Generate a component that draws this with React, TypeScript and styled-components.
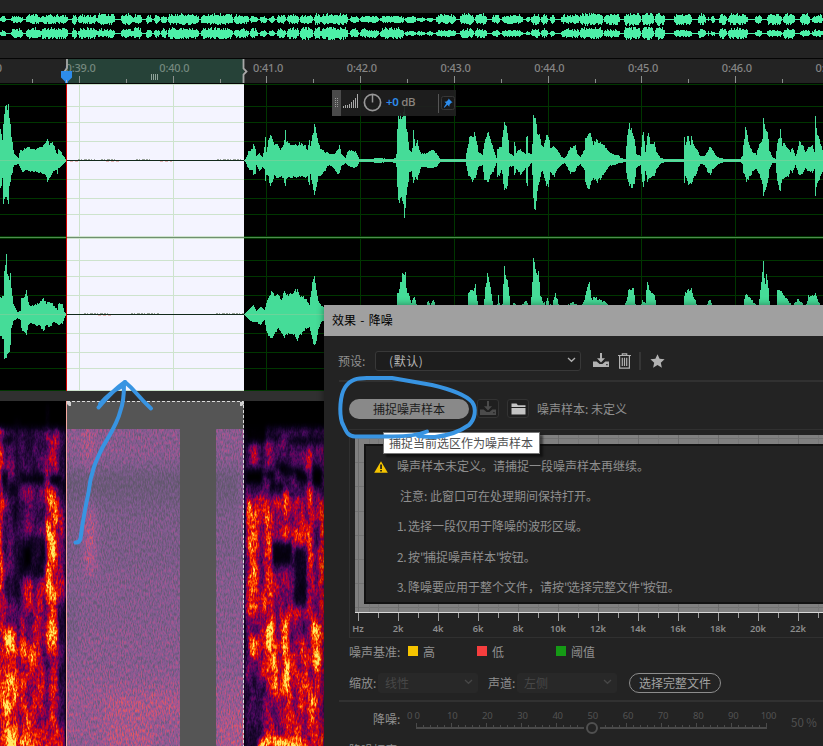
import React from "react";
import styled, { createGlobalStyle } from "styled-components";

const GlobalStyle = createGlobalStyle`
  * { box-sizing: border-box; }
  html, body { margin: 0; padding: 0; background: #232323; }
  body {
    font-family: "Noto Sans CJK SC", "Noto Sans", sans-serif;
    font-size: 12px;
    color: #8f8f8f;
    overflow: hidden;
  }
`;

/* ---------- waveform data: [x, amplitude up, amplitude down] ---------- */

type Env = number[];

const CH1: Env = [
  0,33,29, 2,19,17, 3,34,40, 4,48,40, 6,54,38, 7,49,38, 8,54,40, 9,39,25, 10,35,23, 11,24,14, 12,19,12, 13,10,6, 14,6,4, 18,2,3,
  20,11,8, 22,9,11, 26,13,9, 30,12,10, 35,11,11, 40,14,12, 44,15,14, 46,18,16, 47,22,21, 49,16,18, 51,18,14, 53,16,10, 56,8,9,
  57,6,13, 58,11,7, 60,10,6, 62,6,4, 65,1,1, 66,0,0, 244,0,0, 245,1,1, 248,8,8, 252,12,10, 253,16,14, 255,12,14, 256,4,4, 259,7,10,
  262,3,7, 264,13,8, 265,24,20, 266,8,14, 268,20,17, 270,28,28, 272,20,20, 274,15,15, 277,17,17, 280,11,15, 283,15,18, 285,30,26,
  286,18,18, 290,16,16, 295,15,16, 299,17,16, 305,14,16, 307,10,15, 309,20,25, 310,15,14, 313,28,27, 314,37,32, 316,28,25,
  318,17,16, 320,12,15, 323,10,12, 325,7,10, 327,8,5, 329,6,4, 334,6,8, 338,12,14, 339,14,12, 341,6,5, 345,2,2, 347,8,4,
  350,10,6, 353,10,7, 356,7,6, 359,1,1, 370,1,1, 377,2,2, 390,1,1, 395,2,2, 396,6,6, 397,33,24, 398,45,42, 402,45,38, 404,56,54,
  405,45,44, 406,34,32, 408,19,20, 409,10,12, 411,8,10, 412,12,15, 413,28,24, 415,15,17, 417,20,20, 418,14,14, 421,6,6, 425,7,6,
  429,9,7, 432,10,8, 436,7,6, 440,1,1, 448,1,1, 465,1,1, 466,7,5, 468,17,15, 470,26,17, 472,22,20, 474,28,18, 476,20,15,
  478,8,6, 482,5,4, 484,17,18, 486,23,20, 488,28,22, 490,21,15, 493,11,10, 496,2,2, 497,12,15, 499,12,15, 501,12,9, 502,22,13,
  504,37,32, 507,30,24, 509,8,6, 513,4,5, 514,20,15, 516,8,8, 520,11,14, 525,6,7, 526,25,23, 527,23,26, 528,8,6, 531,6,2,
  532,16,14, 533,49,40, 535,44,49, 537,28,30, 539,25,20, 541,14,10, 543,12,12, 546,26,24, 548,25,25, 550,12,12, 554,14,16,
  557,10,8, 561,3,4, 564,2,2, 566,4,5, 570,12,12, 575,14,10, 577,6,6, 580,3,3, 584,10,10, 585,22,22, 588,28,30, 590,26,24,
  593,17,17, 596,20,22, 600,17,18, 604,14,12, 609,8,5, 614,5,4, 618,5,2, 620,2,2, 625,1,1, 626,15,12, 628,33,21, 629,35,24,
  632,29,26, 634,20,24, 636,6,7, 640,4,4, 642,24,20, 643,30,28, 645,8,10, 647,24,20, 648,27,20, 650,17,17, 654,18,15,
  656,8,8, 660,2,3, 664,1,1, 683,1,1, 684,24,22, 685,15,15, 687,24,21, 688,23,25, 690,15,22, 691,24,22, 693,16,18, 696,12,13,
  698,8,6, 700,4,3, 704,4,4, 707,8,10, 710,14,14, 712,10,9, 716,4,5, 720,2,2, 725,1,1, 740,1,1, 742,4,3, 743,15,12, 745,31,15,
  746,31,20, 748,17,18, 752,8,11, 756,6,8, 758,13,12, 762,22,22, 763,40,36, 766,30,27, 768,23,18, 769,10,8, 772,3,2, 775,1,2,
  777,18,20, 779,24,28, 780,30,30, 782,15,18, 784,17,17, 788,12,15, 790,8,10, 792,12,12, 795,4,4, 797,10,10, 799,18,15,
  803,15,12, 805,8,7, 808,12,10, 812,16,12, 814,8,8, 815,44,37, 816,30,26, 819,20,18, 823,8,8,
];

const CH2: Env = [
  0,16,20, 3,18,24, 4,47,42, 6,58,40, 7,40,42, 9,35,35, 10,41,30, 11,25,14, 13,10,6, 17,2,3, 20,3,5, 21,17,14, 24,17,18,
  26,23,20, 28,12,10, 30,8,8, 35,9,10, 40,12,12, 43,16,16, 46,11,10, 49,13,13, 53,9,7, 57,4,9, 58,11,10, 62,11,9, 64,2,3,
  66,0,0, 244,0,0, 245,1,1, 250,6,6, 253,9,7, 256,3,7, 260,8,10, 264,4,5, 266,12,15, 269,17,23, 271,24,23, 275,18,18,
  278,20,14, 281,15,17, 284,22,22, 288,18,18, 292,22,18, 297,24,25, 300,18,20, 305,16,14, 309,10,13, 312,30,24, 314,39,33,
  316,23,25, 318,12,14, 321,9,7, 324,5,5, 396,5,5, 397,20,5, 399,25,5, 400,30,5, 402,40,5, 404,41,5, 405,40,5, 406,25,5,
  408,20,5, 411,12,5, 414,17,5, 416,10,5, 420,4,5, 428,12,5, 430,9,5, 433,14,5, 436,8,5, 466,5,5, 467,5,5, 468,20,5, 470,23,5,
  473,24,5, 475,30,5, 477,12,5, 478,5,5, 483,5,5, 485,27,5, 487,40,5, 489,35,5, 491,20,5, 493,5,5, 497,10,5, 498,18,5,
  500,5,5, 502,10,5, 504,47,5, 506,38,5, 508,30,5, 510,6,5, 514,12,5, 518,5,5, 526,14,5, 530,4,5, 532,30,5, 533,58,5,
  535,45,5, 537,38,5, 538,44,5, 540,20,5, 542,13,5, 545,10,5, 547,16,5, 549,10,5, 552,9,5, 554,18,5, 555,20,5, 557,14,5,
  560,5,5, 572,12,5, 576,10,5, 580,4,5, 584,15,5, 587,27,5, 589,32,5, 591,15,5, 594,17,5, 600,14,5, 605,13,5, 609,7,5,
  620,3,5, 626,12,5, 628,25,5, 631,26,5, 633,27,5, 635,10,5, 640,5,5, 642,14,5, 645,12,5, 647,34,5, 650,22,5, 654,20,5,
  656,8,5, 665,3,5, 683,3,5, 684,20,5, 688,25,5, 691,25,5, 693,18,5, 697,8,5, 705,8,5, 710,16,5, 712,6,5, 740,5,5, 743,8,5,
  745,20,5, 749,18,5, 753,12,5, 758,6,5, 760,25,5, 762,40,5, 763,50,5, 765,30,5, 766,39,5, 768,25,5, 770,4,5, 776,8,5,
  777,25,5, 781,22,5, 786,16,5, 792,8,5, 797,15,5, 801,12,5, 805,6,5, 808,18,5, 812,18,5, 815,20,5, 818,12,5, 823,5,5,
];

/* Overview loudness: [start x, end x, upper amplitude, lower amplitude] */
const BURSTS: number[][] = [
  [0,6,3,3],[11,23,3,4],[26,41,4,5],[41,68,4,5],[72,77,5,5],[78,97,4,5],[97,115,5,4],[121,133,5,4],[133,142,4,5],
  [146,152,4,5],[154,160,4,4],[161,167,4,5],[168,199,5,5],[201,233,5,5],[234,249,4,4],[250,258,3,4],[260,267,3,3],
  [269,275,3,3],[277,286,4,4],[287,299,4,5],[300,313,4,6],[314,321,5,6],[321,348,5,6],[350,359,3,4],[360,379,3,4],
  [380,404,3,5],[405,416,3,2],[417,425,2,2],[427,433,2,2],[436,456,4,3],[460,474,5,4],[475,487,5,4],[492,500,4,3],
  [502,523,4,3],[526,530,3,2],[531,540,5,4],[541,548,5,4],[550,555,4,3],[561,580,4,4],[580,603,6,5],[604,620,5,4],
  [624,641,6,6],[642,654,6,6],[655,665,6,6],[674,692,5,3],[698,706,5,4],[708,709,3,3],[711,715,4,3],[719,727,5,5],
  [728,748,5,5],[755,762,4,3],[767,782,5,3],[783,795,5,5],[800,810,5,3],[812,823,4,3],
];

const hash = (n: number) => {
  const s = Math.sin(n * 127.1 + 11.7) * 43758.5453;
  return s - Math.floor(s);
};

const sample = (env: Env, x: number): [number, number] => {
  let i = 0;
  while (i + 5 < env.length && env[i + 3] <= x) i += 3;
  if (i + 5 >= env.length) return [env[i + 1], env[i + 2]];
  const t = (x - env[i]) / (env[i + 3] - env[i]);
  return [
    env[i + 1] + (env[i + 4] - env[i + 1]) * t,
    env[i + 2] + (env[i + 5] - env[i + 2]) * t,
  ];
};

const channelPath = (env: Env, cy: number, seed: number) => {
  let d = "";
  for (let x = 0; x < 823; x++) {
    const [u, l] = sample(env, x);
    if (u <= 0 && l <= 0) continue;
    const up = Math.max(0, Math.round(u * (0.9 + 0.17 * hash(x + seed))));
    const dn = Math.max(0, Math.round(l * (0.9 + 0.17 * hash(x * 3 + seed))));
    d += `M${x} ${cy - up}h1v${up + dn + 1}h-1z`;
  }
  return d;
};

const overviewPath = (cy: number, which: 2 | 3) => {
  let d = `M0 ${cy}h823v1h-823z`;
  BURSTS.forEach((b) => {
    for (let x = b[0]; x < b[1]; x += 1) {
      const r = hash(x * 1.7 + which * 31);
      const edge = Math.min(1, (x - b[0] + 1.5) / 3, (b[1] - x + 0.5) / 3);
      const a = b[which] * (0.5 + 0.68 * r) * edge;
      const up = Math.min(6, Math.round(a));
      const dn = Math.min(6, Math.round(b[which] * (0.5 + 0.6 * hash(x * 2.3 + which)) * edge));
      d += `M${x} ${cy - up}h1v${up + dn + 1}h-1z`;
    }
  });
  return d;
};

const SECONDS = [79, 173, 266, 360, 454, 548, 641, 735];
const HALVES = [32, 126, 220, 313, 407, 501, 595, 688, 782];
const LEVELS = [0, 22, 38, 57, 76, 95, 114, 130, 152, 154, 176, 192, 211, 230, 249, 268, 284, 306];

/* ---------- main workspace ---------- */

const Workspace = styled.main`
  display: flex;
  flex-direction: column;
  width: 823px;
  height: 746px;
  overflow: hidden;
  position: relative;
  background: #232323;
`;

const Overview = styled.section`
  margin-top: 13px;
  height: 27px;
  background: #000;
  flex: none;
  svg { display: block; }
`;

const Ruler = styled.section`
  margin-top: 18px;
  height: 26px;
  flex: none;
  display: grid;
  overflow: hidden;
  border-top: 1px solid #050505;
  border-bottom: 1px solid #050505;
  > * { grid-area: 1 / 1; }
`;

const RulerLabels = styled.div`
  display: flex;
  margin-left: -60px;
  width: 960px;
`;

const RulerLabel = styled.span<{ $clipped?: boolean }>`
  flex: 0 0 93.75px;
  text-align: center;
  font: 500 11px/17px "Noto Sans", sans-serif;
  letter-spacing: -0.15px;
  color: ${(p) => (p.$clipped ? "#75897f" : "#868686")};
`;

const RulerRange = styled.div`
  margin-left: 66px;
  width: 178px;
  background: #264238;
`;

const WaveView = styled.section`
  height: 307px;
  flex: none;
  background: #000;
  svg { display: block; }
`;

const Splitter = styled.div`
  height: 10px;
  flex: none;
  background: #303030;
`;

const SpectrumView = styled.section`
  flex: 1;
  background: #000;
  svg { display: block; }
`;

const Hud = styled.div`
  position: absolute;
  left: 332px;
  top: 90px;
  width: 124px;
  height: 26px;
  display: flex;
  align-items: center;
  background: rgba(31, 31, 31, 0.93);
  svg { display: block; flex: none; }
`;

const Gain = styled.span`
  font: 500 11.5px/24px "Noto Sans", sans-serif;
  letter-spacing: -0.3px;
  margin-left: 3px;
  padding-bottom: 2px;
  width: 52px;
  color: #8b8680;
  white-space: nowrap;
  b { color: #2d8ceb; font-weight: 600; }
`;

/* ---------- effect window ---------- */

const Window = styled.section`
  position: absolute;
  left: 324px;
  top: 305px;
  width: 520px;
  height: 460px;
  background: #232323;
  display: flex;
  flex-direction: column;
  box-shadow: 0 0 7px rgba(0, 0, 0, 0.45);
`;

const TitleBar = styled.header`
  height: 31px;
  flex: none;
  padding-left: 8px;
  line-height: 30px;
  word-spacing: 1.6px;
  background: #a0a0a0;
  color: #000;
`;

const PresetRow = styled.div`
  display: flex;
  align-items: center;
  height: 44px;
  flex: none;
  padding: 5px 0 0 14px;
  svg { display: block; flex: none; }
`;

const PresetLabel = styled.span`
  width: 37px;
  padding-bottom: 1px;
  white-space: nowrap;
`;

const Select = styled.div<{ $w: number; $disabled?: boolean }>`
  width: ${(p) => p.$w}px;
  height: 20px;
  display: flex;
  align-items: center;
  justify-content: space-between;
  line-height: 17px;
  padding: 0 ${(p) => (p.$disabled ? "4px 1px 6px" : "4px 1px 13px")};
  border: 1px solid ${(p) => (p.$disabled ? "#282828" : "#383838")};
  border-radius: 3px;
  background: ${(p) => (p.$disabled ? "#282828" : "#1d1d1d")};
  color: ${(p) => (p.$disabled ? "#474747" : "#b4b4b4")};
`;

const PresetName = styled.span`
  letter-spacing: 0.6px;
`;

const Rule = styled.hr`
  border: 0;
  margin: 0 0 0 15px;
  height: 2px;
  flex: none;
  background: #313131;
`;

const PrintRow = styled.div`
  display: flex;
  align-items: center;
  height: 47px;
  flex: none;
  padding: 6px 0 0 25px;
`;

const CaptureButton = styled.button`
  width: 120px;
  height: 20px;
  padding: 0;
  border: 0;
  border-radius: 10px;
  background: #898989;
  color: #1b1b1b;
  font: inherit;
  line-height: 19px;
`;

const IconButton = styled.button`
  width: 22px;
  height: 19px;
  padding: 0;
  display: flex;
  align-items: center;
  justify-content: center;
  border: 1px solid #333;
  border-radius: 3px;
  background: #1f1f1f;
`;

const Graph = styled.div`
  margin-left: 25px;
  height: 209px;
  flex: none;
  border: 1px solid #303030;
  border-right: 0;
  padding: 5px 0 0 5px;
`;

const Plot = styled.div`
  height: 178px;
  padding: 9px 0 0 9px;
  border-bottom: 1px solid #d8d8d8;
  background:
    repeating-linear-gradient(90deg, #6c6c6c 0 1px, transparent 1px 40px) 3px 0,
    repeating-linear-gradient(90deg, #777 0 1px, transparent 1px 40px) 23px 0,
    repeating-linear-gradient(180deg, #727272 0 1px, transparent 1px 24.2px) 0 3px,
    #808080;
`;

const Notice = styled.div`
  height: 160px;
  border: 2px solid #121212;
  border-right: 0;
  background: #232323;
  padding: 5px 0 0 8px;
`;

const NoticeLine = styled.p<{ $gap: number; $indent: number }>`
  margin: 0;
  height: ${(p) => p.$gap}px;
  padding-left: ${(p) => p.$indent}px;
  display: flex;
  align-items: center;
  white-space: nowrap;
  svg { flex: none; margin: 2px 9px 0 0; }
`;

const Ordinal = styled.span`
  width: 11px;
  letter-spacing: -0.3px;
`;

const Quote = styled.span`
  letter-spacing: -1.8px;
`;

const AxisLabels = styled.div`
  display: flex;
  margin-left: -17px;
  margin-top: -1px;
  span {
    flex: 0 0 40px;
    text-align: center;
    font: 600 9.3px/14px "Noto Sans", sans-serif;
    letter-spacing: -0.1px;
    color: #8c8c8c;
  }
`;

const Ticks = styled.svg`
  display: block;
`;

const Legend = styled.div`
  display: flex;
  align-items: center;
  height: 27px;
  flex: none;
  padding: 0 0 1px 25px;
`;

const LegendItem = styled.span<{ $c: string; $w: number }>`
  width: ${(p) => p.$w}px;
  display: flex;
  align-items: center;
  gap: 5px;
  white-space: nowrap;
  &::before {
    content: "";
    width: 10px;
    height: 10px;
    background: ${(p) => p.$c};
  }
`;

const Cell = styled.span<{ $w: number }>`
  width: ${(p) => p.$w}px;
  flex: none;
  white-space: nowrap;
`;

const ChannelRow = styled.div`
  display: flex;
  align-items: center;
  height: 35px;
  flex: none;
  padding-left: 25px;
`;

const OutlineButton = styled.button`
  margin-left: 12px;
  width: 92px;
  height: 20px;
  padding: 0;
  border: 1.5px solid #8c8c8c;
  border-radius: 10px;
  background: transparent;
  color: #a2a2a2;
  font: inherit;
  line-height: 16px;
`;

const SliderRow = styled.div`
  display: flex;
  height: 37px;
  flex: none;
  padding-left: 49px;
`;

const SliderText = styled.span<{ $w: number; $top: number; $dim?: boolean }>`
  width: ${(p) => p.$w}px;
  padding-top: ${(p) => p.$top}px;
  line-height: 18px;
  white-space: nowrap;
  flex: none;
  ${(p) => p.$dim && `color: #505050; padding-left: 7px; font-size: 11.5px;`}
`;

const Scale = styled.div`
  width: 386px;
  margin-left: -17px;
  padding-top: 8px;
  flex: none;
  svg { display: block; }
`;

const ScaleNumbers = styled.div`
  display: flex;
  height: 11px;
  margin-left: 1.5px;
  span {
    flex: 0 0 35.15px;
    text-align: center;
    font: 9.5px/12px "Noto Sans", sans-serif;
    letter-spacing: -0.2px;
    color: #525252;
  }
`;

const MinimumZero = styled.span`
  width: 8px;
  padding-top: 8px;
  font: 9.5px/12px "Noto Sans", sans-serif;
  color: #525252;
`;

const NextRow = styled.div`
  padding-left: 25px;
  margin-top: 2px;
  line-height: 18px;
`;

const Tooltip = styled.div`
  position: absolute;
  left: 383px;
  top: 432px;
  width: 157px;
  height: 22px;
  border: 1px solid #767676;
  background: #fff;
  color: #4f4f4f;
  line-height: 19px;
  padding-left: 5px;
  white-space: nowrap;
  box-shadow: 3px 3px 2px rgba(0, 0, 0, 0.5);
`;

const Ink = styled.svg`
  position: absolute;
  left: 0;
  top: 0;
  pointer-events: none;
`;

/* ---------- icons ---------- */

const SaveIcon = ({ color = "#b2b2b2" }: { color?: string }) => (
  <svg width="16" height="15" viewBox="0 0 16 15" fill={color}>
    <path d="M0 8.500h3.600l3 2.500h2.800l3-2.500H16V14H0z" />
    <path d="M7 0h2v5.200h3L8 9.600 4 5.200h3z" />
    <path d="M13.200 11h1.400v1.300h-1.400z" fill="#232323" />
  </svg>
);

const TrashIcon = () => (
  <svg width="13" height="16" viewBox="0 0 13 16" fill="none" stroke="#b2b2b2" strokeWidth="1.200">
    <path d="M0 2.500h13M4.300 2.300V.8h4.400v1.500M1.600 2.500v12.700h9.800V2.500M4.300 4.700v8.200M6.500 4.700v8.200M8.700 4.700v8.200" />
  </svg>
);

const StarIcon = () => (
  <svg width="15" height="14" viewBox="0 0 15 14" fill="#b2b2b2">
    <path d="M7.500.2l2.100 4.600 5 .5-3.800 3.400 1.100 5-4.400-2.600-4.400 2.600 1.100-5L.4 5.300l5-.5z" />
  </svg>
);

const FolderIcon = () => (
  <svg width="15" height="12" viewBox="0 0 15 12" fill="#c4c4c4">
    <path d="M.5.5h5l1.400 1.700h7.600V4H.5zM.5 5h14v6.500H.5z" />
  </svg>
);

const Chevron = ({ color }: { color: string }) => (
  <svg width="9" height="6" viewBox="0 0 9 6" fill="none" stroke={color} strokeWidth="1.300">
    <path d="M1 1l3.500 3.300L8 1" />
  </svg>
);

const WarningIcon = () => (
  <svg width="14" height="12" viewBox="0 0 14 12">
    <path d="M7 .2L13.800 11.800H.2z" fill="#f5c400" />
    <path d="M6.200 3.500h1.700v4.500H6.200zM6.200 9h1.700v1.600H6.200z" fill="#1b1b1b" />
  </svg>
);

/* ---------- spectrogram ---------- */

/* [x, y, width, height, energy 0-100] */
const VOICE: number[][] = [
  [-5,28,71,330,27],[-5,28,8,330,60],[3,45,12,35,34],[16,50,30,90,27],[46,28,13,60,44],[59,28,8,90,22],
  [0,36,14,6,4],[22,74,22,8,0],[50,74,10,10,0],[2,70,5,18,6],[10,82,6,12,6],
  [0,95,12,120,38],[-6,85,9,180,66],[20,84,24,50,36],[46,88,11,150,84],
  [57,95,8,110,44],[4,118,14,90,30],[18,136,28,40,14],[24,146,7,20,0],[20,178,25,60,48],[34,190,10,28,58],
  [4,226,12,180,92],[-5,190,10,160,62],[16,245,18,110,60],[34,215,12,140,46],[46,225,12,28,80],[48,255,12,100,50],
  [58,200,8,150,26],[20,240,14,20,82],[36,250,6,60,62],[52,282,6,40,62],[20,325,44,25,64],[20,336,12,12,86],
  [15,20,2,180,10],[19,20,1,330,10],[47,5,1,30,14],[65,28,2,330,6],
  [244,28,90,320,33],[244,28,22,14,2],[268,33,14,6,2],[288,36,36,7,4],[276,62,10,7,0],
  [250,42,7,20,46],[264,42,6,22,46],[307,42,6,50,48],[284,44,8,16,36],
  [244,68,18,16,0],[266,70,9,8,0],[280,66,22,8,4],[296,72,12,8,0],[312,66,10,20,0],[270,82,14,6,4],
  [244,96,90,128,46],[247,96,11,124,74],[264,98,8,110,70],[264,98,20,5,76],
  [258,112,6,80,42],[274,105,18,40,44],[283,88,6,65,62],[272,140,20,24,8],[294,146,13,60,12],[294,98,10,45,54],
  [276,165,18,50,42],[308,85,5,150,74],[313,100,6,110,36],[319,96,6,110,66],
  [244,216,20,60,42],[262,212,62,140,58],[267,224,9,70,88],[282,220,7,75,88],[250,236,14,20,70],
  [276,250,6,40,56],[290,215,20,40,40],[312,218,9,48,90],[300,235,8,50,66],
  [244,278,22,70,25],[262,292,24,40,46],[288,285,18,50,62],[311,296,9,24,80],
  [258,338,50,16,92],[244,30,2,330,16],
];

const NOISE: number[][] = [
  [50,10,220,350,29],[50,10,220,53,32],[83,10,12,78,40],[50,68,220,24,20],[50,92,220,16,23],
  [50,108,220,60,27],[84,106,12,94,42],[86,160,9,30,50],[50,168,220,60,30],[50,228,220,50,32],[50,278,220,70,36],
  [106,298,90,14,46],[104,322,50,30,43],[220,310,50,50,42],[66,190,12,60,26],[240,10,10,120,32],
];

const Blocks = ({ data }: { data: number[][] }) => (
  <>
    {data.map(([x, y, w, h, v], i) => {
      const g = Math.round(v * 2.55);
      return <rect key={i} x={x} y={y} width={w} height={h} fill={`rgb(${g},${g},${g})`} />;
    })}
  </>
);

const Heat = () => (
  <feComponentTransfer>
    <feFuncR type="table" tableValues="0 0.04 0.14 0.27 0.46 0.70 0.88 0.98 1 1 1" />
    <feFuncG type="table" tableValues="0 0.01 0.03 0.04 0.01 0 0.04 0.22 0.46 0.74 0.92" />
    <feFuncB type="table" tableValues="0 0.10 0.22 0.36 0.36 0.20 0.02 0 0.04 0.20 0.40" />
    <feFuncA type="linear" slope="0" intercept="1" />
  </feComponentTransfer>
);

const GRAY = (k: number, b: number) =>
  `${k} 0 0 0 ${b} ${k} 0 0 0 ${b} ${k} 0 0 0 ${b} 0 0 0 0 1`;

const Spectrogram = () => (
  <svg width="324" height="345" viewBox="0 0 324 345">
    <defs>
      <filter id="voice" filterUnits="userSpaceOnUse" x="0" y="0" width="324" height="345" colorInterpolationFilters="sRGB">
        <feGaussianBlur in="SourceGraphic" stdDeviation="1.500 3.500" result="soft" />
        <feTurbulence type="fractalNoise" baseFrequency="0.6 0.25" numOctaves="2" seed="4" />
        <feColorMatrix type="matrix" values={GRAY(2.2, -0.6)} result="fine" />
        <feTurbulence type="fractalNoise" baseFrequency="0.12 0.04" numOctaves="3" seed="9" />
        <feColorMatrix type="matrix" values={GRAY(2.2, -0.6)} result="coarse" />
        <feComposite in="soft" in2="fine" operator="arithmetic" k1="0.5" k2="0.71" k3="0" k4="0" result="a" />
        <feComposite in="a" in2="coarse" operator="arithmetic" k1="0.6" k2="0.65" k3="0" k4="0" />
        <Heat />
      </filter>
      <filter id="hiss" filterUnits="userSpaceOnUse" x="66" y="0" width="178" height="345" colorInterpolationFilters="sRGB">
        <feGaussianBlur in="SourceGraphic" stdDeviation="3 8" result="soft" />
        <feTurbulence type="fractalNoise" baseFrequency="0.75 0.25" numOctaves="2" seed="21" />
        <feColorMatrix type="matrix" values={GRAY(2.2, -0.6)} result="fine" />
        <feComposite in="soft" in2="fine" operator="arithmetic" k1="0.75" k2="0.6" k3="0" k4="0" />
        <Heat />
      </filter>
    </defs>
    <rect width="324" height="345" fill="#000" />
    <g filter="url(#voice)">
      <rect x="-10" y="-10" width="350" height="370" fill="#000" />
      <Blocks data={VOICE} />
    </g>
    <g filter="url(#hiss)">
      <Blocks data={NOISE} />
    </g>
    <rect x="66" y="0" width="178" height="28" fill="#000" />
    <rect x="180" y="0" width="36" height="345" fill="#000" />
    <rect x="66" y="0" width="178" height="345" fill="#fff" fillOpacity="0.335" />
    <path d="M66.500 0V345" stroke="#f5a9a0" />
    <path d="M67 .5H243.500V345" fill="none" stroke="#dcdcdc" strokeDasharray="3 2" />
    <path d="M67 1h4v4h-2l-2-2zM244 1h-4v4h2l2-2z" fill="#d0d0d0" />
  </svg>
);

/* ---------- page ---------- */

const Waveforms = () => (
  <svg width="823" height="307" viewBox="0 0 823 307" shapeRendering="crispEdges">
    <rect x="66" width="178" height="306" fill="#f4f4ff" />
    {LEVELS.map((y) => (
      <g key={y}>
        <rect y={y} width="823" height="1" fill="#003600" />
        <rect x="66" y={y} width="178" height="1" fill="#cde3cd" />
      </g>
    ))}
    {SECONDS.map((x) => (
      <rect key={x} x={x} width="1" height="307" fill={x < 244 ? "#cde3cd" : "#003600"} />
    ))}
    <path d={channelPath(CH1, 76, 5)} fill="#45dc98" />
    <path d={channelPath(CH2, 230, 77)} fill="#45dc98" />
    <path d="M0 76h66v1H0zM244 76h579v1H244zM0 230h66v1H0zM244 230h579v1H244z" fill="#6bd49a" />
    <path d="M66 76h178v1H66zM66 230h178v1H66z" fill="#122a1c" />
    <path d="M78 75.500h17M101 75.500h16M136 75.500h16M217 75.500h26M84 229.500h24M131 229.500h28M216 229.500h28" stroke="#98a298" strokeDasharray="2 1 1 2 3 1" />
    <path d="M70 77.500h10M106 77.500h14M160 77.500h12M98 231.500h14" stroke="#e3b4b4" strokeDasharray="3 2" />
    <rect y="153" width="823" height="1" fill="#4f8a4f" />
    <rect x="66" y="153" width="178" height="1" fill="#6f8f6f" />
    <rect x="66" width="1" height="307" fill="#d40000" />
  </svg>
);

const HudBars = () => (
  <svg width="51" height="26" viewBox="0 0 51 26">
    <rect width="9" height="26" fill="#4a4a4a" />
    <path d="M3.500 8V18M5.500 8V18" stroke="#9a9a9a" strokeDasharray="1 1" />
    <path d="M11.500 18v-2M13.500 18v-3M15.500 18v-3M17.500 18v-4M19.500 18v-6M21.500 18v-8M23.500 18v-10M25.500 18V4" stroke="#a9a9a9" />
    <circle cx="40.500" cy="12.500" r="8.100" fill="none" stroke="#979797" strokeWidth="1.700" />
    <path d="M40.500 5v7.500" stroke="#979797" strokeWidth="1.500" />
  </svg>
);

const PinIcon = () => (
  <svg width="16" height="18" viewBox="0 0 16 18">
    <rect x="2.500" y="2.500" width="13" height="13" rx="2" fill="#191919" stroke="#373737" />
    <path d="M9.500 4.500l4 4-1.300.3-1.700 1.900-.2 2-1.900-1.900-2.900 2.900-.7-.5 2.500-3.600-1.800-1.800 2-.2 1.800-1.800z" fill="#2d8ceb" />
  </svg>
);

export default function App() {
  return (
    <>
      <GlobalStyle />
      <Workspace>
        <Overview>
          <svg width="823" height="27" viewBox="0 0 823 27" shapeRendering="crispEdges">
            <path d={overviewPath(6, 2)} fill="#4df0a8" />
            <path d={overviewPath(20, 3)} fill="#4df0a8" />
          </svg>
        </Overview>

        <Ruler>
          <RulerRange />
          <RulerLabels>
            {[38, 39, 40, 41, 42, 43, 44, 45, 46, 47].map((s) => (
              <RulerLabel key={s} $clipped={s === 39 || s === 40}>{`0:${s}.0`}</RulerLabel>
            ))}
          </RulerLabels>
          <svg width="823" height="24" viewBox="0 0 823 24">
            {SECONDS.map((x) => (
              <rect key={x} x={x} y="17" width="1" height="7" fill="#8a8f8c" />
            ))}
            {HALVES.map((x) => (
              <rect key={x} x={x} y="20" width="1" height="4" fill="#8a8f8c" />
            ))}
            <path d="M151.500 15v6M153.500 15v6M155.500 15v6M157.500 15v6" stroke="#8fa39a" />
            <path d="M67 0v9l-2.500 3.500" fill="none" stroke="#a8a8a8" strokeWidth="1.800" />
            <path d="M243.500 0v9.500l3 3-3 3V24" fill="none" stroke="#a8a8a8" strokeWidth="1.800" />
            <path d="M61 12h11v6.500L68 22.500v1.500h-3v-1.500l-4-4z" fill="#2d8ceb" />
            <rect x="66" y="21" width="1" height="3" fill="#aeb6ba" />
          </svg>
        </Ruler>

        <WaveView>
          <Waveforms />
        </WaveView>
        <Splitter />
        <SpectrumView>
          <Spectrogram />
        </SpectrumView>

        <Hud>
          <HudBars />
          <Gain>
            <b>+0</b> dB
          </Gain>
          <svg width="1" height="19">
            <rect width="1" height="19" fill="#555" />
          </svg>
          <PinIcon />
        </Hud>

        <Window>
          <TitleBar>效果 - 降噪</TitleBar>
          <PresetRow>
            <PresetLabel>预设:</PresetLabel>
            <Select $w={206}>
              <PresetName>(默认)</PresetName>
              <Chevron color="#b0b0b0" />
            </Select>
            <Cell $w={12} />
            <SaveIcon />
            <Cell $w={9} />
            <TrashIcon />
            <Cell $w={8} />
            <svg width="2" height="18">
              <rect width="2" height="18" fill="#353535" />
            </svg>
            <Cell $w={9} />
            <StarIcon />
          </PresetRow>
          <Rule />
          <PrintRow>
            <CaptureButton>捕捉噪声样本</CaptureButton>
            <Cell $w={8} />
            <IconButton>
              <SaveIcon color="#4b4b4b" />
            </IconButton>
            <Cell $w={8} />
            <IconButton>
              <FolderIcon />
            </IconButton>
            <Cell $w={8} />
            <span>噪声样本: 未定义</span>
          </PrintRow>

          <Graph>
            <Plot>
              <Notice>
                <NoticeLine $gap={29} $indent={0}>
                  <WarningIcon />
                  噪声样本未定义。请捕捉一段噪声样本再继续。
                </NoticeLine>
                <NoticeLine $gap={30} $indent={26}>注意: 此窗口可在处理期间保持打开。</NoticeLine>
                <NoticeLine $gap={31} $indent={23}>
                  <Ordinal>1.</Ordinal>选择一段仅用于降噪的波形区域。
                </NoticeLine>
                <NoticeLine $gap={30} $indent={23}>
                  <Ordinal>2.</Ordinal>按<Quote>"</Quote>捕捉噪声样本<Quote>"</Quote>按钮。
                </NoticeLine>
                <NoticeLine $gap={30} $indent={23}>
                  <Ordinal>3.</Ordinal>降噪要应用于整个文件，请按<Quote>"</Quote>选择完整文件<Quote>"</Quote>按钮。
                </NoticeLine>
              </Notice>
            </Plot>
            <Ticks width="480" height="10">
              {Array.from({ length: 24 }, (_, i) => (
                <rect key={i} x={3 + i * 20} y="0" width="1" height={i % 2 ? 5 : 8} fill="#a0a0a0" />
              ))}
            </Ticks>
            <AxisLabels>
              {["Hz", "2k", "4k", "6k", "8k", "10k", "12k", "14k", "16k", "18k", "20k", "22k"].map((t) => (
                <span key={t}>{t}</span>
              ))}
            </AxisLabels>
          </Graph>

          <Legend>
            <Cell $w={59}>噪声基准:</Cell>
            <LegendItem $c="#f5c400" $w={69}>高</LegendItem>
            <LegendItem $c="#f63e3e" $w={79}>低</LegendItem>
            <LegendItem $c="#159a15" $w={60}>阈值</LegendItem>
          </Legend>

          <ChannelRow>
            <Cell $w={29}>缩放:</Cell>
            <Select $w={100} $disabled>
              线性
              <Chevron color="#474747" />
            </Select>
            <Cell $w={10} />
            <Cell $w={29}>声道:</Cell>
            <Select $w={100} $disabled>
              左侧
              <Chevron color="#474747" />
            </Select>
            <OutlineButton>选择完整文件</OutlineButton>
          </ChannelRow>
          <Rule />

          <SliderRow>
            <SliderText $w={34} $top={8}>降噪:</SliderText>
            <MinimumZero>0</MinimumZero>
            <Scale>
              <ScaleNumbers>
                {[0, 10, 20, 30, 40, 50, 60, 70, 80, 90, 100].map((n) => (
                  <span key={n}>{n}</span>
                ))}
              </ScaleNumbers>
              <svg width="386" height="14" viewBox="0 0 386 14">
                {Array.from({ length: 51 }, (_, i) => (
                  <rect key={i} x={18 + Math.round(i * 7)} y={i % 5 ? 4 : 2} width="1" height={i % 5 ? 3 : 5} fill="#4a4a4a" />
                ))}
                <rect x="18" y="6" width="168" height="2" fill="#4a4a4a" />
                <rect x="202" y="6" width="167" height="2" fill="#4a4a4a" />
                <rect x="186" y="0" width="16" height="14" fill="#232323" />
                <circle cx="194" cy="7" r="5" fill="none" stroke="#505050" strokeWidth="2" />
              </svg>
            </Scale>
            <SliderText $w={48} $top={11} $dim>
              50 %
            </SliderText>
          </SliderRow>
          <NextRow>降噪幅度:</NextRow>
        </Window>

        <Tooltip>捕捉当前选区作为噪声样本</Tooltip>

        <Ink width="823" height="746" viewBox="0 0 823 746" fill="none" stroke="#3894e2" strokeWidth="4" strokeLinecap="round" strokeLinejoin="round">
          <path d="M75.500 542.500q4 .5 5-4c2-16 5-32 8-46 2-20 8-33 14-45 8-14 15-24 18-37 3-8 3.500-16 3.500-26" />
          <path d="M98.500 407.500Q112 391 125 382M100 404Q110 392 121 387" />
          <path d="M125 382q6 5 12 12t14 14.500" />
          <path d="M427 431.500c-10 4-22 5-34 5h-38c-8 0-9-6-13-14-3-10-2-27 3-35 5-8 12-10 25-9.500h22l40 7c17 4 33 9 40 17 5 7 3 17-3 23-10 7-24 11-34 12-7 .5-12-.5-17-1" />
        </Ink>
      </Workspace>
    </>
  );
}
